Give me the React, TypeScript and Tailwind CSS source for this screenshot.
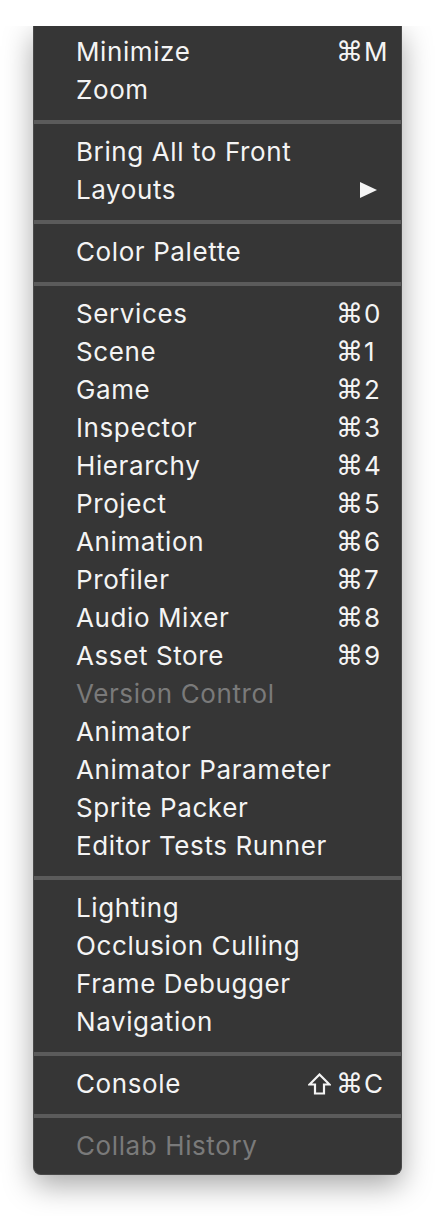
import React from 'react';

type Item =
  | { sep: true }
  | { label: string; cmd?: boolean; shift?: boolean; keyChar?: string; disabled?: boolean; submenu?: boolean; sep?: false };

const items: Item[] = [
  { label: 'Minimize', cmd: true, keyChar: 'M' },
  { label: 'Zoom' },
  { sep: true },
  { label: 'Bring All to Front' },
  { label: 'Layouts', submenu: true },
  { sep: true },
  { label: 'Color Palette' },
  { sep: true },
  { label: 'Services', cmd: true, keyChar: '0' },
  { label: 'Scene', cmd: true, keyChar: '1' },
  { label: 'Game', cmd: true, keyChar: '2' },
  { label: 'Inspector', cmd: true, keyChar: '3' },
  { label: 'Hierarchy', cmd: true, keyChar: '4' },
  { label: 'Project', cmd: true, keyChar: '5' },
  { label: 'Animation', cmd: true, keyChar: '6' },
  { label: 'Profiler', cmd: true, keyChar: '7' },
  { label: 'Audio Mixer', cmd: true, keyChar: '8' },
  { label: 'Asset Store', cmd: true, keyChar: '9' },
  { label: 'Version Control', disabled: true },
  { label: 'Animator' },
  { label: 'Animator Parameter' },
  { label: 'Sprite Packer' },
  { label: 'Editor Tests Runner' },
  { sep: true },
  { label: 'Lighting' },
  { label: 'Occlusion Culling' },
  { label: 'Frame Debugger' },
  { label: 'Navigation' },
  { sep: true },
  { label: 'Console', shift: true, cmd: true, keyChar: 'C' },
  { sep: true },
  { label: 'Collab History', disabled: true },
];

function ShiftIcon() {
  return (
    <svg className="mr-[5px]" width="23" height="22" viewBox="0 0 23 22">
      <path d="M11.5 1.5 L21.5 11.5 L16 11.5 L16 20.5 L7 20.5 L7 11.5 L1.5 11.5 Z" fill="none" stroke="#f4f4f4" strokeWidth="2.2" strokeLinejoin="miter" />
    </svg>
  );
}

export default function App() {
  return (
    <div className="min-h-screen bg-white pt-[26px] font-['Inter','Noto_Sans',sans-serif]">
      {/* clip the shadow at the top, the menu hangs from the bar */}
      <div className="overflow-hidden pl-[33px] pb-[42px]">
        <div className="w-[369px] bg-[#363636] border-x border-b border-[#4a4a4a] rounded-b-[8px] pt-[7px] pb-[9px] shadow-[0_10px_30px_rgba(0,0,0,0.35)]">
          {items.map((it, i) =>
            it.sep ? (
              <div key={i} className="pt-[11px] pb-[9px]">
                <div className="h-[4px] bg-[#5b5b5b]" />
              </div>
            ) : (
              <div key={i} className="flex h-[38px] items-center pl-[42px] text-[26px] leading-[38px] tracking-[0.6px]">
                <span className={it.disabled ? 'text-[#7a7a7a]' : 'text-[#f4f4f4]'}>{it.label}</span>
                {it.keyChar && (
                  <span className="ml-auto flex items-center text-[#f4f4f4]">
                    <span className="flex w-[80px] items-center justify-end">
                      {it.shift && <ShiftIcon />}
                      <span className="font-['DejaVu_Sans',sans-serif] text-[27px] tracking-normal">⌘</span>
                    </span>
                    <span className="w-[38px] pl-[1px]">{it.keyChar}</span>
                  </span>
                )}
                {it.submenu && (
                  <svg className="ml-auto mr-[24px]" width="17" height="16" viewBox="0 0 17 16">
                    <polygon points="0,0 17,8 0,16" fill="#f4f4f4" />
                  </svg>
                )}
              </div>
            )
          )}
        </div>
      </div>
    </div>
  );
}
